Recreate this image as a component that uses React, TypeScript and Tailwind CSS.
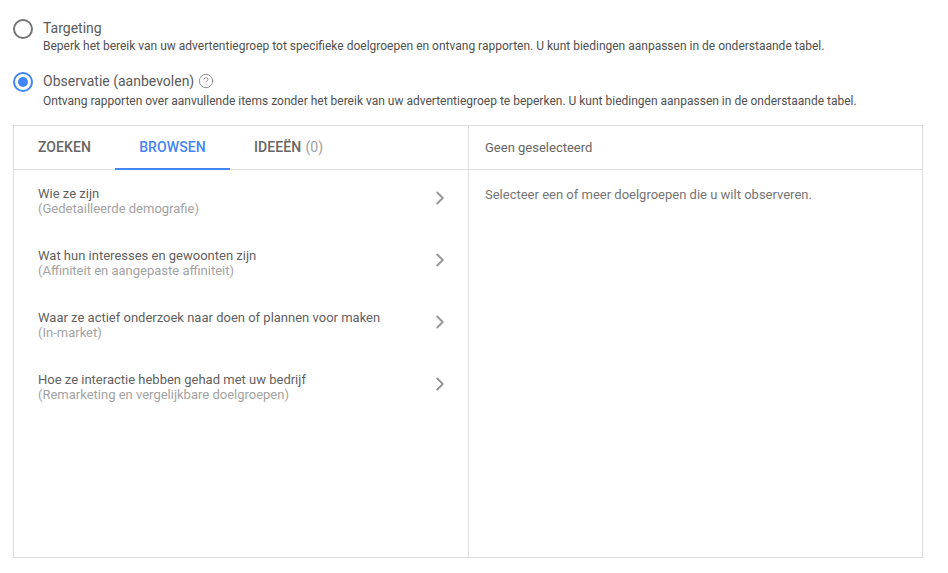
import { ChevronRight, CircleHelp } from "lucide-react";

const rows = [
  { title: "Wie ze zijn", sub: "(Gedetailleerde demografie)" },
  { title: "Wat hun interesses en gewoonten zijn", sub: "(Affiniteit en aangepaste affiniteit)" },
  { title: "Waar ze actief onderzoek naar doen of plannen voor maken", sub: "(In-market)" },
  { title: "Hoe ze interactie hebben gehad met uw bedrijf", sub: "(Remarketing en vergelijkbare doelgroepen)" },
];

function Radio({ checked }: { checked?: boolean }) {
  return (
    <span
      className={`mt-[1px] flex h-5 w-5 shrink-0 items-center justify-center rounded-full border-2 ${
        checked ? "border-[#4285f4]" : "border-[#757575]"
      }`}
    >
      {checked && <span className="h-[10px] w-[10px] rounded-full bg-[#4285f4]" />}
    </span>
  );
}

export default function App() {
  return (
    <div className="h-[573px] w-[948px] overflow-hidden bg-white pl-[13px] pr-[25px] pt-[18px] font-['Roboto',sans-serif] text-[#5f5f5f]">
      {/* Options */}
      <div className="flex gap-[10px]">
        <Radio />
        <div>
          <div className="text-[14px] leading-[20px] text-[#5a5a5a]">Targeting</div>
          <div className="text-[12px] leading-[16px] text-[#4f4f4f]">
            Beperk het bereik van uw advertentiegroep tot specifieke doelgroepen en ontvang rapporten. U kunt biedingen aanpassen in de onderstaande tabel.
          </div>
        </div>
      </div>
      <div className="mt-[17px] flex gap-[10px]">
        <Radio checked />
        <div>
          <div className="flex items-center gap-[4px] text-[14px] leading-[20px] text-[#5a5a5a]">
            Observatie (aanbevolen)
            <CircleHelp size={16} strokeWidth={1.2} className="text-[#757575]" />
          </div>
          <div className="mt-[2px] text-[12px] leading-[16px] text-[#4f4f4f]">
            Ontvang rapporten over aanvullende items zonder het bereik van uw advertentiegroep te beperken. U kunt biedingen aanpassen in de onderstaande tabel.
          </div>
        </div>
      </div>

      {/* Panel */}
      <div className="mt-[16px] flex h-[433px] border border-[#dfdfdf]">
        <div className="w-[455px] shrink-0 border-r border-[#dfdfdf]">
          <div className="flex h-[44px] border-b border-[#dfdfdf] text-[14px] font-medium tracking-[0.1px]">
            <div className="flex w-[101px] items-center pl-[24px] text-[#666]">ZOEKEN</div>
            <div className="relative flex w-[115px] items-center justify-center text-[#4285f4]">
              BROWSEN
              <span className="absolute bottom-[-1px] left-0 right-0 h-[2px] bg-[#4285f4]" />
            </div>
            <div className="flex items-center pl-[24px] text-[#666]">
              IDEEËN <span className="ml-[4px] font-normal text-[#9e9e9e]">(0)</span>
            </div>
          </div>
          <div className="pt-[16px]">
            {rows.map((row) => (
              <div key={row.title} className="flex h-[62px] items-start justify-between pl-[24px] pr-[17px]">
                <div className="text-[13px] leading-[15px]">
                  <div className="text-[#5f5f5f]">{row.title}</div>
                  <div className="text-[#a3a3a3]">{row.sub}</div>
                </div>
                <ChevronRight size={22} strokeWidth={2} className="mt-[1px] text-[#949494]" />
              </div>
            ))}
          </div>
        </div>
        <div className="flex-1">
          <div className="flex h-[44px] items-center border-b border-[#dfdfdf] pl-[16px] text-[13px] text-[#666]">
            Geen geselecteerd
          </div>
          <div className="pl-[16px] pt-[17px] text-[13px] leading-[15px] text-[#757575]">
            Selecteer een of meer doelgroepen die u wilt observeren.
          </div>
        </div>
      </div>
    </div>
  );
}
